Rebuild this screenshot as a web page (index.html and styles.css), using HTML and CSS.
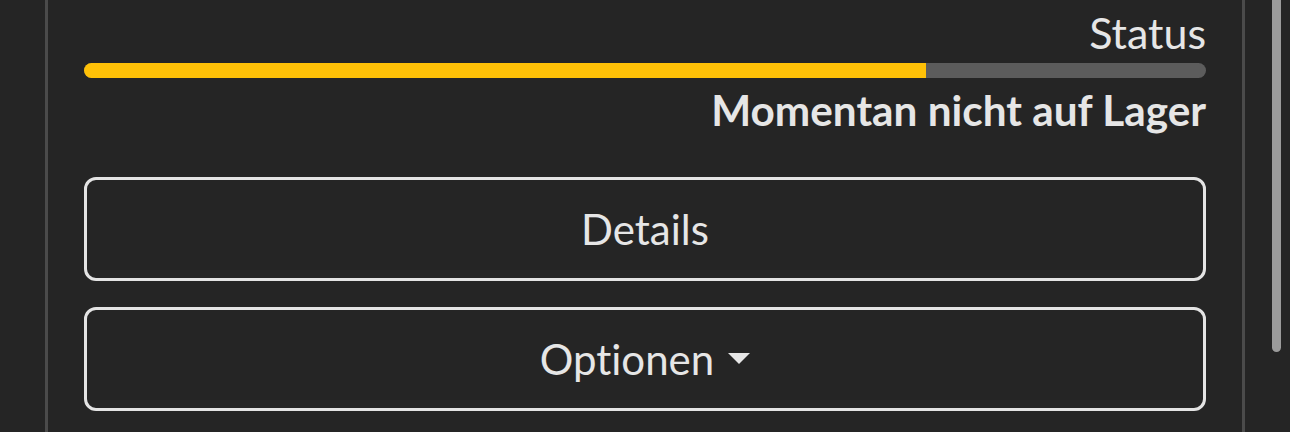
FILE: index.html
```html
<!DOCTYPE html>
<html lang="de">
<head>
<meta charset="utf-8">
<title>Status</title>
<link rel="stylesheet" href="styles.css">
</head>
<body>
<div class="page">
  <div class="card">
    <div class="status-label">Status</div>
    <div class="progress"><div class="progress-fill" style="width:75%"></div></div>
    <div class="status-text">Momentan nicht auf Lager</div>
    <button class="btn">Details</button>
    <button class="btn btn-dropdown">Optionen<span class="caret"></span></button>
  </div>
  <div class="scrollbar"><div class="thumb"></div></div>
</div>
</body>
</html>
```
FILE: styles.css
```css
html, body {
  margin: 0;
  padding: 0;
  background: #252525;
  overflow: hidden;
}
body {
  font-family: Lato, "Open Sans", sans-serif;
  font-variant-ligatures: none;
  color: #e6e6e6;
}
.page {
  display: flex;
  height: 432px;
}
.card {
  margin-left: 45px;
  width: 1200px;
  box-sizing: border-box;
  border-left: 3px solid #4b4b4b;
  border-right: 3px solid #4b4b4b;
  padding: 6.5px 36px 0;
  display: flex;
  flex-direction: column;
}
.status-label {
  text-align: right;
  font-size: 43px;
  line-height: 1.2;
}
.progress {
  margin-top: 4.9px;
  height: 15px;
  border-radius: 8px;
  background: #5c5c5c;
  overflow: hidden;
}
.progress-fill {
  height: 100%;
  background: #ffc107;
}
.status-text {
  margin-top: 7.5px;
  text-align: right;
  font-size: 42.3px;
  font-weight: 700;
  line-height: 1.2;
}
.btn {
  margin-top: 41px;
  height: 104px;
  box-sizing: border-box;
  border: 3px solid #e4e4e4;
  border-radius: 12px;
  background: transparent;
  color: #e6e6e6;
  font-family: Lato, "Open Sans", sans-serif;
  font-variant-ligatures: none;
  font-size: 42px;
  line-height: 1.2;
  display: flex;
  align-items: center;
  justify-content: center;
  padding: 0;
}
.btn-dropdown {
  margin-top: 26px;
}
.caret {
  display: inline-block;
  margin-left: 14px;
  width: 0;
  height: 0;
  border-top: 11.5px solid #e6e6e6;
  border-left: 11.5px solid transparent;
  border-right: 11.5px solid transparent;
  position: relative;
  top: -1px;
}
.scrollbar {
  margin-left: 27px;
  width: 9px;
}
.thumb {
  height: 352px;
  background: #9b9b9b;
  border-radius: 0 0 4.5px 4.5px;
}
```
